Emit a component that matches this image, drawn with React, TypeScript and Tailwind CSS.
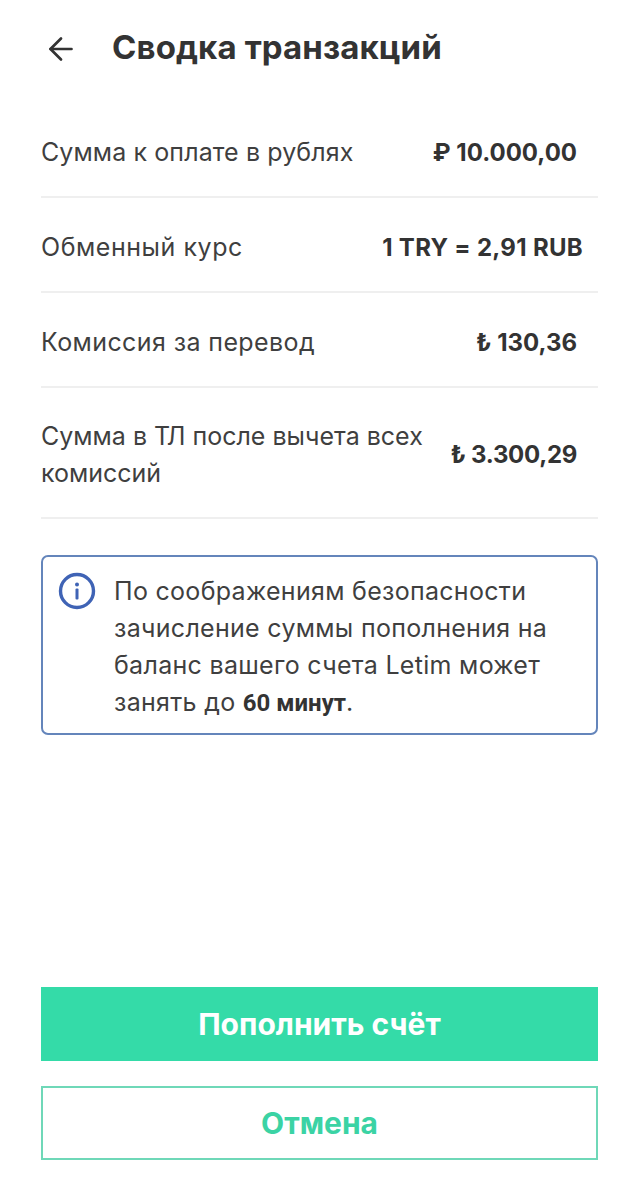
import { ArrowLeft } from "lucide-react";

const rows = [
    { label: "Сумма к оплате в рублях", labelClass: "tracking-[0.1px]", value: "₽ 10.000,00", right: "pr-[21px]" },
    { label: "Обменный курс", labelClass: "tracking-[0.55px]", value: "1 TRY = 2,91 RUB", right: "pr-[15px] tracking-[0.3px]" },
    { label: "Комиссия за перевод", labelClass: "tracking-[0.4px]", value: "₺ 130,36", right: "pr-[21px]" },
];

export default function App() {
    return (
        <div className="flex flex-col h-[1200px] w-full bg-white pl-[41px] pr-[40px] pb-[40px] text-[#3f3f3f] font-['Inter','Liberation_Sans',sans-serif]">
            <div className="flex items-center h-[103px] pb-[7px]">
                <ArrowLeft size={36} strokeWidth={1.8} className="ml-[2px] mt-[2px] text-[#333333]" />
                <h1 className="ml-[33px] text-[33px] font-bold text-[#333333] tracking-[0.1px]">Сводка транзакций</h1>
            </div>

            <div className="flex flex-col">
                {rows.map(row => (
                    <div key={row.label} className="flex items-center justify-between h-[95px] pt-[6px] border-b-2 border-[#efefef]">
                        <span className={`text-[25px] ${row.labelClass}`}>{row.label}</span>
                        <span className={`text-[24px] font-bold text-[#333333] ${row.right}`}>{row.value}</span>
                    </div>
                ))}
                <div className="flex items-center justify-between h-[131px] pt-[4px] border-b-2 border-[#efefef]">
                    <span className="w-[400px] text-[25px] leading-[37px]">Сумма в ТЛ после вычета всех комиссий</span>
                    <span className="text-[24px] font-bold text-[#333333] pr-[21px] tracking-[-0.3px]">₺ 3.300,29</span>
                </div>
            </div>

            <div className="flex items-start mt-[36px] h-[180px] rounded-[7px] border-2 border-[#6485bb] pl-[15px] pr-[20px] pt-[16px]">
                <svg width="38" height="38" viewBox="0 0 38 38" fill="none" className="shrink-0 -mt-[1px]">
                    <circle cx="19" cy="19" r="16.5" stroke="#3f63b5" strokeWidth="3.4" />
                    <circle cx="19" cy="12.5" r="2" fill="#3f63b5" />
                    <rect x="17.5" y="16.5" width="3" height="11" rx="1" fill="#3f63b5" />
                </svg>
                <p className="ml-[18px] text-[25px] leading-[37px] tracking-[0.3px]">
                    По соображениям безопасности зачисление суммы пополнения на баланс вашего счета Letim может занять до <b className="font-bold font-['Roboto'] text-[24px] tracking-normal text-[#333333]">60 минут</b>.
                </p>
            </div>

            <div className="flex flex-col gap-[25px] mt-auto">
                <button className="h-[74px] bg-[#34dba8] text-white text-[30px] font-bold">Пополнить счёт</button>
                <button className="h-[74px] border-2 border-[#6fd8b8] text-[#3bd3a4] text-[30px] font-bold">Отмена</button>
            </div>
        </div>
    );
}
